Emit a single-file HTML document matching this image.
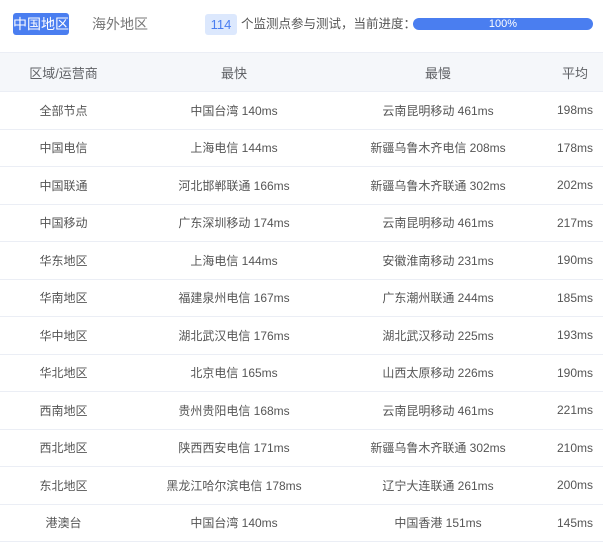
<!DOCTYPE html>
<html><head><meta charset="utf-8"><style>
*{margin:0;padding:0;box-sizing:border-box}
body{width:603px;height:540px;overflow:hidden;background:#fff;font-family:"Liberation Sans","Noto Sans CJK SC",sans-serif;color:#555;position:relative}
.tab{position:absolute;top:13px;height:22px;line-height:22px;font-size:14px}
.t1{left:13px;width:56px;background:#4a7ef0;color:#fff;border-radius:3px;text-align:center}
.t2{left:92px;color:#777}
.badge{position:absolute;left:205px;top:14px;width:32px;height:21px;background:#dce8fd;color:#4a7ef0;border-radius:3px;text-align:center;line-height:21px;font-size:13px}
.info{position:absolute;left:241px;top:14px;line-height:21px;font-size:12.5px;color:#555}
.bar{position:absolute;left:413px;top:18px;width:180px;height:12px;background:#4a7ef0;border-radius:6px;color:#fff;font-size:11px;line-height:12px;text-align:center}
.head{position:absolute;left:0;top:52px;width:603px;height:40px;background:#f5f7fa;border-top:1px solid #ebeef5;border-bottom:1px solid #ebeef5}
.row{position:absolute;left:0;width:603px;height:37.5px;border-bottom:1px solid #ebeef5}
.c{position:absolute;top:0;height:100%;display:flex;align-items:center;justify-content:center;font-size:12px;white-space:nowrap}
.head .c{font-size:13px;color:#606266}
.a{left:0;width:127px}.b{left:134px;width:200px}.d{left:338px;width:200px}.e{left:540px;width:70px}
</style></head><body>
<div class="tab t1">中国地区</div><div class="tab t2">海外地区</div>
<div class="badge">114</div><div class="info">个监测点参与测试，当前进度：</div>
<div class="bar">100%</div>
<div class="head"><div class="c a">区域/运营商</div><div class="c b">最快</div><div class="c d">最慢</div><div class="c e">平均</div></div>
<div id="rows"></div>
<div class="row" style="top:92px"><div class="c a">全部节点</div><div class="c b">中国台湾 140ms</div><div class="c d">云南昆明移动 461ms</div><div class="c e">198ms</div></div>
<div class="row" style="top:129.5px"><div class="c a">中国电信</div><div class="c b">上海电信 144ms</div><div class="c d">新疆乌鲁木齐电信 208ms</div><div class="c e">178ms</div></div>
<div class="row" style="top:167px"><div class="c a">中国联通</div><div class="c b">河北邯郸联通 166ms</div><div class="c d">新疆乌鲁木齐联通 302ms</div><div class="c e">202ms</div></div>
<div class="row" style="top:204.5px"><div class="c a">中国移动</div><div class="c b">广东深圳移动 174ms</div><div class="c d">云南昆明移动 461ms</div><div class="c e">217ms</div></div>
<div class="row" style="top:242px"><div class="c a">华东地区</div><div class="c b">上海电信 144ms</div><div class="c d">安徽淮南移动 231ms</div><div class="c e">190ms</div></div>
<div class="row" style="top:279.5px"><div class="c a">华南地区</div><div class="c b">福建泉州电信 167ms</div><div class="c d">广东潮州联通 244ms</div><div class="c e">185ms</div></div>
<div class="row" style="top:317px"><div class="c a">华中地区</div><div class="c b">湖北武汉电信 176ms</div><div class="c d">湖北武汉移动 225ms</div><div class="c e">193ms</div></div>
<div class="row" style="top:354.5px"><div class="c a">华北地区</div><div class="c b">北京电信 165ms</div><div class="c d">山西太原移动 226ms</div><div class="c e">190ms</div></div>
<div class="row" style="top:392px"><div class="c a">西南地区</div><div class="c b">贵州贵阳电信 168ms</div><div class="c d">云南昆明移动 461ms</div><div class="c e">221ms</div></div>
<div class="row" style="top:429.5px"><div class="c a">西北地区</div><div class="c b">陕西西安电信 171ms</div><div class="c d">新疆乌鲁木齐联通 302ms</div><div class="c e">210ms</div></div>
<div class="row" style="top:467px"><div class="c a">东北地区</div><div class="c b">黑龙江哈尔滨电信 178ms</div><div class="c d">辽宁大连联通 261ms</div><div class="c e">200ms</div></div>
<div class="row" style="top:504.5px"><div class="c a">港澳台</div><div class="c b">中国台湾 140ms</div><div class="c d">中国香港 151ms</div><div class="c e">145ms</div></div>
</body></html>
